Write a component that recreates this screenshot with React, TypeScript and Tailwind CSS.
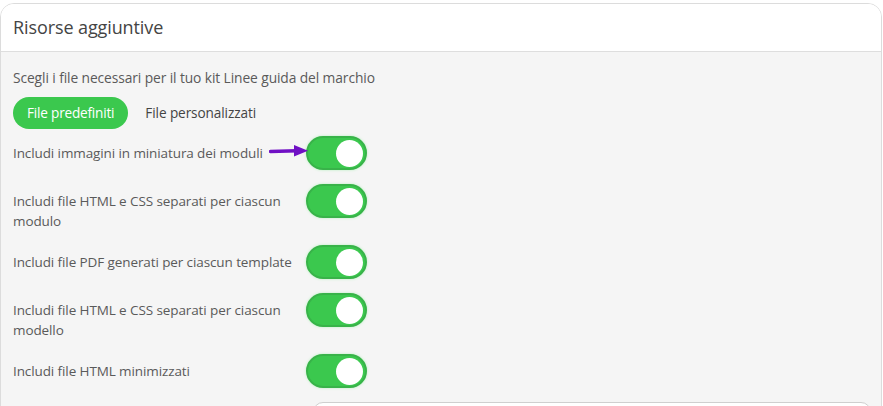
import React from 'react';

const rows = [
  { label: 'Includi immagini in miniatura dei moduli', arrow: true },
  { label: 'Includi file HTML e CSS separati per ciascun modulo' },
  { label: 'Includi file PDF generati per ciascun template' },
  { label: 'Includi file HTML e CSS separati per ciascun modello' },
  { label: 'Includi file HTML minimizzati' },
];

function Toggle() {
  return (
    <div className="w-[61px] h-[34px] shrink-0 rounded-full bg-[#3bc84e] border-2 border-[#38b349] shadow-[0_0_3px_#b9f0c0] flex items-center justify-end pr-[2px]">
      <div className="w-[27px] h-[27px] rounded-full bg-white" />
    </div>
  );
}

export default function App() {
  return (
    <div className="w-[883px] h-[406px] overflow-hidden bg-white pt-[3px]" style={{ fontFamily: '"Open Sans", "Noto Sans", sans-serif' }}>
      <div className="w-[882px] rounded-t-[14px] border border-[#dcdcdc] overflow-hidden">
        <div className="h-[48px] bg-white border-b border-[#dedede] px-[12px] flex items-center">
          <h2 className="text-[18px] text-[#444] tracking-[-0.1px]">Risorse aggiuntive</h2>
        </div>
        <div className="bg-[#f5f5f5] px-[12px] pt-[16px] h-[400px]">
          <p className="text-[13.8px] leading-[19px] text-[#5a5a5a] tracking-[-0.1px]">Scegli i file necessari per il tuo kit Linee guida del marchio</p>
          <div className="flex items-center mt-[10px] gap-[17px]">
            <button className="h-[32px] px-[14px] rounded-full bg-[#3bc84e] text-white text-[13.6px] tracking-[-0.2px]">File predefiniti</button>
            <span className="text-[13.6px] text-[#444] tracking-[-0.1px]">File personalizzati</span>
          </div>
          <div className="flex flex-col gap-[14px] mt-[7px]">
            {rows.map((r, i) => (
              <div key={i} className="flex items-start">
                <div className="relative w-[293px] shrink-0 pt-[7px] text-[13.5px] leading-[20px] text-[#5a5a5a] tracking-[-0.1px]">
                  {r.label}
                  {r.arrow && (
                    <svg width="40" height="14" viewBox="0 0 40 14" className="absolute right-[-3px] top-[8px]">
                      <path d="M1.5 7.5 L28 6.8" stroke="#7010c4" strokeWidth="3.5" strokeLinecap="round" />
                      <path d="M25 1 L39 6.8 L25 12.5 Z" fill="#7010c4" />
                    </svg>
                  )}
                </div>
                <Toggle />
              </div>
            ))}
          </div>
          <div className="ml-[300px] mt-[14px] w-[558px] h-[40px] rounded-[10px] border border-[#cfcfcf] bg-white" />
        </div>
      </div>
    </div>
  );
}
